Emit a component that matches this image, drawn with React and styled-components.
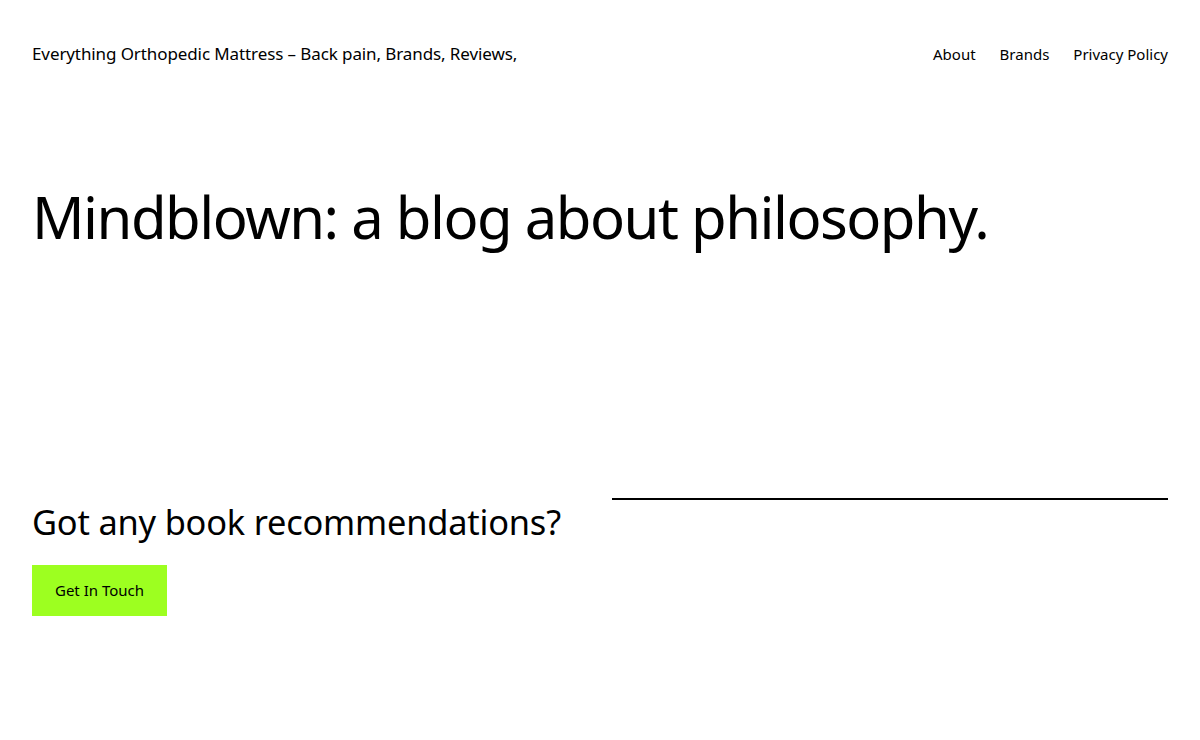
import styled, { createGlobalStyle } from "styled-components";

const GlobalStyle = createGlobalStyle`
  html, body {
    margin: 0;
    padding: 0;
    background: #ffffff;
    color: #000000;
    font-family: "Noto Sans", "Open Sans", sans-serif;
  }
  * { box-sizing: border-box; }
`;

const Page = styled.div`
  width: 1200px;
  height: 740px;
  padding: 0 32px;
  overflow: hidden;
`;

const Header = styled.header`
  display: flex;
  align-items: center;
  justify-content: space-between;
  height: 107px;
`;

const SiteTitle = styled.a`
  font-size: 17px;
  color: #000;
  text-decoration: none;
  letter-spacing: -0.1px;
`;

const Nav = styled.nav`
  display: flex;
  gap: 24px;
  a {
    font-size: 15px;
    color: #000;
    text-decoration: none;
  }
`;

const Hero = styled.h1`
  margin: 75px 0 0;
  font-size: 58px;
  font-weight: 400;
  line-height: 1.2;
  letter-spacing: -1.5px;
`;

const Columns = styled.section`
  display: grid;
  grid-template-columns: 1fr 1fr;
  gap: 24px;
  margin-top: 249px;
`;

const Column = styled.div`
  display: flex;
  flex-direction: column;
  align-items: flex-start;
`;

const Question = styled.h2`
  margin: 0;
  font-size: 34.4px;
  font-weight: 400;
  line-height: 1.2;
  letter-spacing: -0.2px;
`;

const Button = styled.a`
  display: inline-flex;
  align-items: center;
  justify-content: center;
  margin-top: 23px;
  width: 135px;
  height: 51px;
  background: #9dff20;
  color: #000;
  font-size: 15px;
  text-decoration: none;
`;

const Separator = styled.hr`
  width: 100%;
  margin: -3px 0 0;
  border: none;
  border-top: 2px solid #000;
`;

export default function App() {
  return (
    <>
      <GlobalStyle />
      <Page>
        <Header>
          <SiteTitle href="#">Everything Orthopedic Mattress – Back pain, Brands, Reviews,</SiteTitle>
          <Nav>
            <a href="#">About</a>
            <a href="#">Brands</a>
            <a href="#">Privacy Policy</a>
          </Nav>
        </Header>
        <Hero>Mindblown: a blog about philosophy.</Hero>
        <Columns>
          <Column>
            <Question>Got any book recommendations?</Question>
            <Button href="#">Get In Touch</Button>
          </Column>
          <Column>
            <Separator />
          </Column>
        </Columns>
      </Page>
    </>
  );
}
